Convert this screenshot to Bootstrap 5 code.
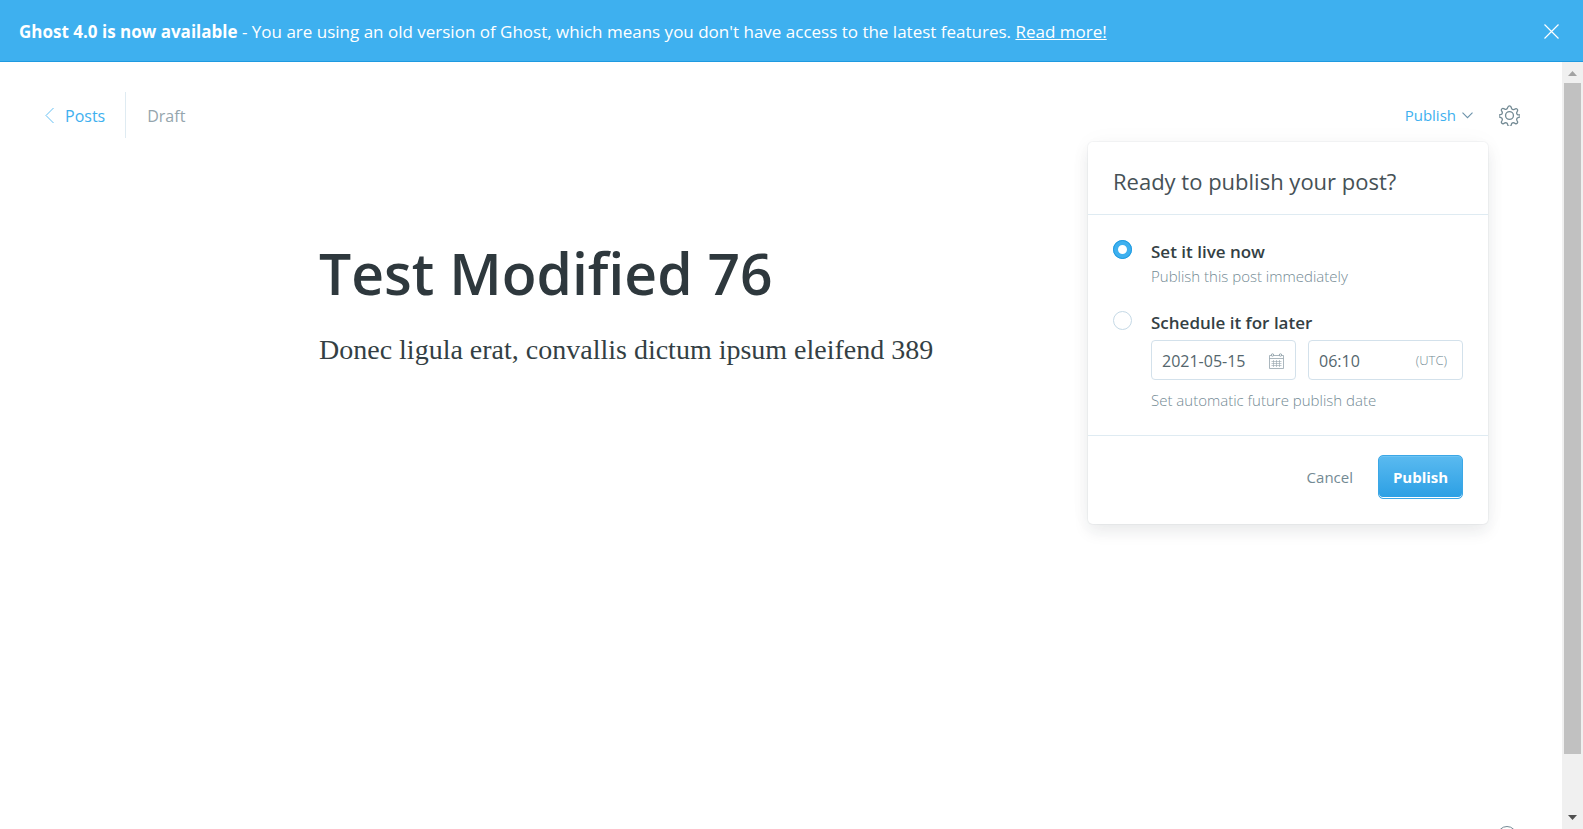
<!DOCTYPE html>
<html lang="en">
<head>
<meta charset="utf-8">
<meta name="viewport" content="width=device-width, initial-scale=1">
<title>Test Modified 76 - Ghost</title>
<link href="https://cdn.jsdelivr.net/npm/bootstrap@5.3.0/dist/css/bootstrap.min.css" rel="stylesheet">
<style>
:root { --blue: #3eb0ef; --dark: #343f44; --mid: #738a94; --soft: #95a5ad; --line: #dfebf2; }
body { font-family: "Open Sans", "Noto Sans", sans-serif; font-size: 16px; color: var(--dark); }
svg { display: block; }
.notice { background: var(--blue); border-bottom: 1px solid #1f9ae0; height: 62px; padding: 1px 24px 0 19px; font-size: 17px; }
.notice .plain-btn { color: #fff; }
.notice-text { padding-top: 2px; }
.plain-btn { background: none; border: 0; padding: 0; color: var(--mid); }
.editor-head { padding: 30px 42px 0 45px; }
.crumb { height: 46px; color: var(--soft); }
.crumb a, .publish-toggle { color: var(--blue); text-decoration: none; }
.crumb-back { border-right: 1px solid var(--line); padding-right: 20px; gap: 10px; }
.crumb-label { padding-top: 2px; }
.crumb-state { padding-left: 21px; }
.publish-menu { position: absolute; top: 80px; right: 74px; width: 400px; background: #fff; border-radius: 5px; box-shadow: 0 0 0 1px rgba(99,114,130,.06), 0 8px 16px rgba(27,39,51,.08), 0 0 24px rgba(27,39,51,.03); z-index: 5; }
.menu-title { font-size: 22px; line-height: 30px; font-weight: 400; color: #465156; padding: 24px 25px 18px; border-bottom: 1px solid var(--line); }
.menu-body { padding: 25px 25px 23px; }
.menu-foot { border-top: 1px solid var(--line); padding: 19px 25px 25px; gap: 25px; }
.choice { gap: 19px; }
.later { margin-top: 23px; }
.picks { margin-top: 5px; }
.choice-radio { appearance: none; width: 19px; height: 19px; border: 1px solid #c5d9e6; border-radius: 50%; flex: none; margin: 0; background: #fff; }
.choice-radio:checked { border: 5px solid var(--blue); outline: 1px solid #1f9ae0; outline-offset: -1px; }
.choice-name { font-size: 17px; line-height: 24px; font-weight: 600; }
.choice-help { font-size: 15px; line-height: 24px; font-weight: 300; color: var(--mid); }
.pick { height: 40px; border: 1px solid #d3e1eb; border-radius: 4px; padding: 2px 10px 0; }
.pick input { border: 0; padding: 0; outline: 0; width: 100%; min-width: 0; background: none; color: #54666d; font-size: 16px; }
.pick-date { width: 145px; padding-right: 11px; }
.pick-time { width: 155px; padding-right: 15px; }
.zone { font-size: 13px; font-weight: 300; color: var(--mid); }
.go-btn { width: 85px; height: 44px; border: 1px solid #3ba7e6; border-radius: 5px; color: #fff; font-weight: 700; font-size: 15px; padding: 0; background: linear-gradient(#5abaf0, #2b9fe4); box-shadow: inset 0 -1px 0 #fff, inset 0 1px 0 #6dc3f3; }
.cancel-btn { font-size: 15px; }
.publish-toggle { gap: 6px; font-size: 15px; }
.head-tools { gap: 26px; }
.post { padding: 102px 319px 0; }
.post-title { font-size: 57px; line-height: 66px; font-weight: 600; color: #2e383d; }
.post-text { font-family: "Liberation Serif", serif; font-size: 28px; line-height: 40px; margin-top: 24px; }
.help-ring { position: absolute; right: 45px; bottom: -17px; width: 20px; height: 20px; border: 1px solid var(--mid); border-radius: 50%; }
.bar-track { width: 21px; background: #f0f0f0; padding: 8px 2px; }
.bar-thumb { background: #c1c1c1; margin: 7px 0 61px; }
</style>
</head>
<body class="vh-100 d-flex flex-column overflow-hidden">
<aside class="notice d-flex align-items-center justify-content-between text-white flex-shrink-0">
  <span class="notice-text"><strong>Ghost 4.0 is now available</strong> - You are using an old version of Ghost, which means you don't have access to the latest features. <a href="#" class="text-white">Read more!</a></span>
  <button class="plain-btn" type="button" aria-label="Close"><svg width="15" height="15" viewBox="0 0 15 15" fill="none" stroke="currentColor" stroke-width="1.2"><path d="M.5.5l14 14M14.500.5l-14 14"/></svg></button>
</aside>
<div class="d-flex flex-grow-1 overflow-hidden">
  <main class="flex-grow-1 position-relative overflow-hidden">
    <header class="editor-head d-flex justify-content-between">
      <nav class="crumb d-flex">
        <a href="#" class="crumb-back d-flex align-items-center"><svg width="10" height="17" viewBox="0 0 10 17" fill="none" stroke="currentColor" stroke-width=".8"><path d="M8.500 1L1 8.500 8.500 16"/></svg><span class="crumb-label">Posts</span></a>
        <span class="crumb-state crumb-label d-flex align-items-center">Draft</span>
      </nav>
      <div class="head-tools d-flex align-items-center">
        <button class="plain-btn publish-toggle d-flex align-items-center" type="button">Publish<svg width="11" height="7" viewBox="0 0 11 7" fill="none" stroke="#6c93aa" stroke-width="1.1"><path d="M.5.700l5 5 5-5"/></svg></button>
        <button class="plain-btn" type="button" aria-label="Settings"><svg width="21" height="21" viewBox="0 0 24 24" fill="none" stroke="currentColor" stroke-width="1.500" stroke-linejoin="round"><circle cx="12" cy="12" r="4.500"/><path d="M13.800 2.300l.5 1.500a2.200 2.200 0 0 0 3 1.300l1.400-.7a1.800 1.800 0 0 1 2.400 2.400l-.7 1.400a2.200 2.200 0 0 0 1.300 3l1.500.1a1 1 0 0 1 0 2.600l-1.500.6a2.200 2.200 0 0 0-1.300 3l.7 1.300a1.800 1.800 0 0 1-2.400 2.400l-1.400-.7a2.200 2.200 0 0 0-3 1.300l-.5 1.500a1.900 1.900 0 0 1-3.600 0l-.5-1.500a2.200 2.200 0 0 0-3-1.300l-1.400.7a1.800 1.800 0 0 1-2.400-2.400l.7-1.300a2.200 2.200 0 0 0-1.300-3L.9 13.800a1.300 1.300 0 0 1 0-2.600l1.400-.4a2.200 2.200 0 0 0 1.300-3l-.7-1.300a1.800 1.800 0 0 1 2.400-2.400l1.400.7a2.200 2.200 0 0 0 3-1.300l.5-1.200a1.900 1.900 0 0 1 3.600 0z"/></svg></button>
      </div>
    </header>
    <section class="post">
      <h1 class="post-title mb-0">Test Modified 76</h1>
      <p class="post-text mb-0">Donec ligula erat, convallis dictum ipsum eleifend 389</p>
    </section>
    <form class="publish-menu">
      <h2 class="menu-title mb-0">Ready to publish your post?</h2>
      <div class="menu-body">
        <div class="choice d-flex">
          <input class="choice-radio" type="radio" name="when" id="now" checked>
          <div>
            <label class="choice-name d-block" for="now">Set it live now</label>
            <div class="choice-help">Publish this post immediately</div>
          </div>
        </div>
        <div class="choice later d-flex">
          <input class="choice-radio" type="radio" name="when" id="later">
          <div class="flex-grow-1">
            <label class="choice-name d-block" for="later">Schedule it for later</label>
            <div class="picks d-flex justify-content-between">
              <div class="pick pick-date d-flex align-items-center">
                <input type="text" value="2021-05-15" aria-label="Date">
                <svg class="flex-shrink-0" width="15" height="16" viewBox="0 0 15 16" fill="none" stroke="#95a5ad"><path d="M.5 2.500h14v13H.5zM.5 5.500h14" stroke-width=".8"/><path d="M4.500 7v7M7.500 7v7M10.500 7v7M2.500 8.500h10M2.500 10.500h10M2.500 12.500h10" stroke-width=".6"/><circle cx="3.500" cy="2" r="1.200" fill="#fff"/><circle cx="11.500" cy="2" r="1.200" fill="#fff"/></svg>
              </div>
              <div class="pick pick-time d-flex align-items-center">
                <input type="text" value="06:10" aria-label="Time">
                <span class="zone">(UTC)</span>
              </div>
            </div>
            <div class="choice-help mt-2">Set automatic future publish date</div>
          </div>
        </div>
      </div>
      <div class="menu-foot d-flex justify-content-end align-items-center">
        <button class="plain-btn cancel-btn" type="button">Cancel</button>
        <button class="go-btn" type="submit">Publish</button>
      </div>
    </form>
    <a href="#" class="help-ring" aria-label="Help"></a>
  </main>
  <div class="bar-track d-flex flex-column flex-shrink-0" aria-hidden="true">
    <svg class="mx-auto flex-shrink-0" width="9" height="6" viewBox="0 0 9 6"><path d="M0 6l4.500-5L9 6z" fill="#a3a3a3"/></svg>
    <div class="bar-thumb flex-grow-1"></div>
    <svg class="mx-auto flex-shrink-0" width="9" height="6" viewBox="0 0 9 6"><path d="M0 0h9L4.500 5z" fill="#505050"/></svg>
  </div>
</div>
<script src="https://cdn.jsdelivr.net/npm/bootstrap@5.3.0/dist/js/bootstrap.bundle.min.js"></script>
</body>
</html>
